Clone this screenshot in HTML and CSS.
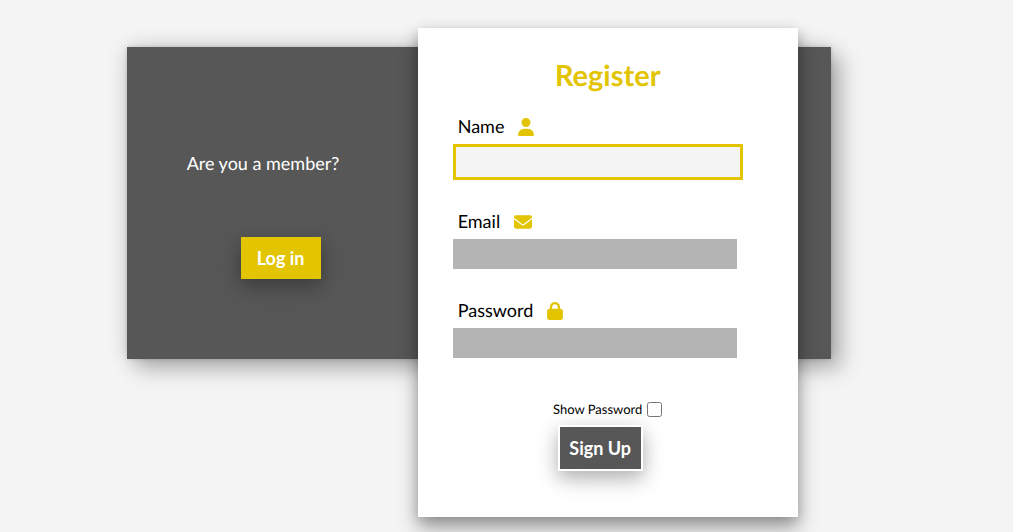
FILE: index.html
```html
<!DOCTYPE html>
<html lang="en">
<head>
<meta charset="utf-8">
<meta name="viewport" content="width=device-width, initial-scale=1">
<title>Register</title>
<link rel="stylesheet" href="styles.css">
</head>
<body>
<main class="panel">
  <section class="member">
    <p class="member-text">Are you a member?</p>
    <button class="button button-login" type="button">Log in</button>
  </section>
  <form class="card">
    <h1 class="title">Register</h1>
    <div class="field">
      <label class="label" for="name">Name
        <svg class="icon icon-narrow" viewBox="0 0 448 512" aria-hidden="true"><path d="M224 256A128 128 0 1 0 224 0a128 128 0 1 0 0 256zm-45.700 48C79.800 304 0 383.800 0 482.300C0 498.700 13.300 512 29.700 512H418.300c16.400 0 29.700-13.300 29.700-29.700C448 383.800 368.200 304 269.700 304H178.300z"/></svg>
      </label>
      <input class="input input-active" id="name" type="text">
    </div>
    <div class="field">
      <label class="label" for="email">Email
        <svg class="icon" viewBox="0 0 512 512" aria-hidden="true"><path d="M48 64C21.500 64 0 85.500 0 112c0 15.100 7.100 29.300 19.200 38.400L236.800 313.600c11.400 8.500 27 8.500 38.400 0L492.800 150.400c12.100-9.100 19.200-23.300 19.200-38.400c0-26.500-21.500-48-48-48H48zM0 176V384c0 35.300 28.700 64 64 64H448c35.300 0 64-28.700 64-64V176L294.400 339.200c-22.800 17.100-54 17.100-76.800 0L0 176z"/></svg>
      </label>
      <input class="input" id="email" type="email">
    </div>
    <div class="field">
      <label class="label" for="password">Password
        <svg class="icon icon-narrow" viewBox="0 0 448 512" aria-hidden="true"><path d="M144 144v48H304V144c0-44.200-35.800-80-80-80s-80 35.800-80 80zM80 192V144C80 64.500 144.500 0 224 0s144 64.500 144 144v48h16c35.300 0 64 28.700 64 64V448c0 35.300-28.700 64-64 64H64c-35.300 0-64-28.700-64-64V256c0-35.300 28.700-64 64-64H80z"/></svg>
      </label>
      <input class="input" id="password" type="password">
    </div>
    <div class="show">
      <label for="show">Show Password</label>
      <input class="checkbox" id="show" type="checkbox">
    </div>
    <button class="button button-signup" type="submit">Sign Up</button>
  </form>
</main>
</body>
</html>
```
FILE: styles.css
```css
* {
  box-sizing: border-box;
}

body {
  display: flow-root;
  min-height: 100vh;
  margin: 0;
  background: #f4f4f4;
  color: #000;
  font-family: Lato, "Liberation Sans", sans-serif;
  font-size: 18px;
  line-height: 24px;
  text-rendering: geometricPrecision;
}

.panel {
  display: grid;
  grid-template-columns: minmax(220px, 1fr) 380px 33px;
  margin: 47px 18% 0 12.5%;
  background: #575757;
  box-shadow: 10px 10px 20px rgba(0, 0, 0, 0.25), 0 0 20px rgba(0, 0, 0, 0.15), 0 0 4px rgba(0, 0, 0, 0.15);
}

.member {
  padding: 104px 0 0 60px;
}

.member-text {
  margin: 0 0 62px;
  color: #fff;
}

.button {
  font: inherit;
  font-weight: 700;
  color: #fff;
  cursor: pointer;
}

.button-login {
  display: block;
  width: 80px;
  height: 42px;
  margin-left: 54px;
  padding: 0;
  border: 0;
  background: #e2c400;
  box-shadow: 0 8px 24px rgba(0, 0, 0, 0.2), 0 6px 16px rgba(0, 0, 0, 0.15);
}

.card {
  display: flex;
  flex-direction: column;
  margin: -19px 0 -158px;
  padding: 30px 35px 46px;
  background: #fff;
  box-shadow: 0 12px 20px rgba(0, 0, 0, 0.3), 0 4px 12px rgba(0, 0, 0, 0.2);
}

.title {
  margin: 0 0 20px;
  color: #e2c400;
  font-size: 29px;
  line-height: 36px;
  text-align: center;
}

.field {
  display: flex;
  flex-direction: column;
  margin-bottom: 29px;
}

.label {
  display: flex;
  align-items: center;
  gap: 14px;
  height: 24px;
  margin: 0 0 6px 5px;
}

.icon {
  width: 18px;
  height: 18px;
  margin-top: 2px;
  fill: #e2c400;
}

.icon-narrow {
  width: 16px;
}

.input {
  width: 284px;
  height: 30px;
  padding: 0 8px;
  border: 0;
  border-radius: 0;
  outline: 0;
  background: #b4b4b4;
  font: inherit;
}

.input-active {
  width: 290px;
  height: 36px;
  border: 3px solid #e2c400;
  background: #f4f4f4;
}

.show {
  display: flex;
  align-items: center;
  justify-content: center;
  gap: 5px;
  margin-top: 13px;
  font-size: 13px;
  line-height: 18px;
}

.checkbox {
  width: 15px;
  height: 15px;
  margin: 0;
}

.button-signup {
  width: 85px;
  height: 46px;
  margin: 7px 0 0 105px;
  padding: 0;
  border: 2px solid #fff;
  background: #575757;
  box-shadow: 0 8px 24px rgba(0, 0, 0, 0.2), 0 6px 16px rgba(0, 0, 0, 0.15);
}
```
